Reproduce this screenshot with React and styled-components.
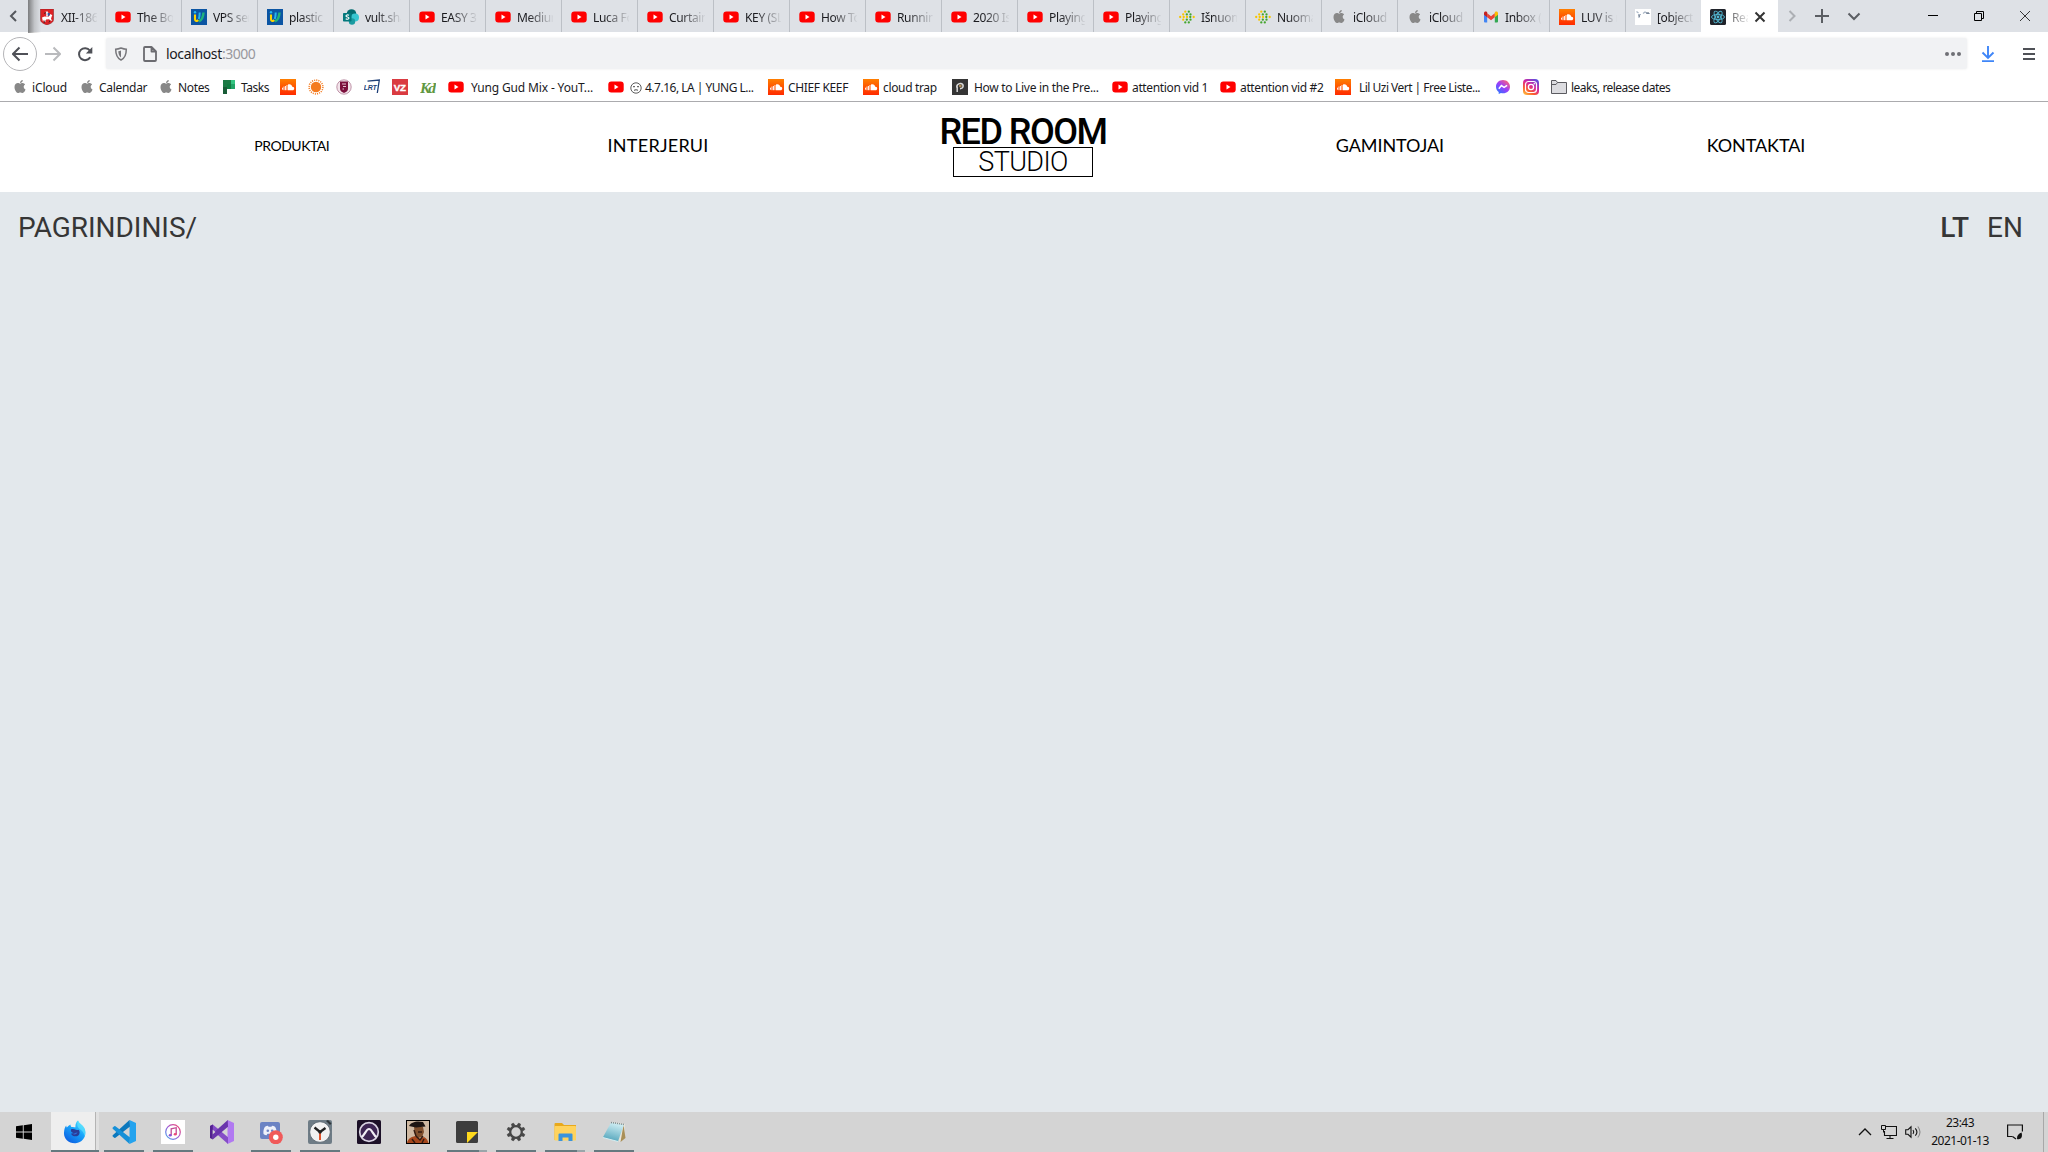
import React from "react";
import styled, { createGlobalStyle, css } from "styled-components";
import { FaApple } from "react-icons/fa";

const ui = `"Noto Sans", "Open Sans", sans-serif`;

const Global = createGlobalStyle`
  * { box-sizing: border-box; }
  html, body { margin: 0; height: 100%; overflow: hidden; }
  svg { display: block; flex: none; }
`;

const Screen = styled.div`
  width: 2048px;
  height: 1152px;
  display: flex;
  flex-direction: column;
  background: #fff;
  font-family: ${ui};
  color: #1a1a1e;
`;

/* ---------- tab strip ---------- */
const TabStrip = styled.div`
  height: 32px;
  flex: none;
  display: flex;
  background: #dee1e6;
`;
const ScrollLeft = styled.div`
  width: 28px;
  display: flex;
  align-items: center;
  justify-content: center;
`;
const StripShade = styled.div`
  width: 2px;
  position: relative;
  &::after {
    content: "";
    position: absolute;
    left: 0;
    top: 0;
    width: 13px;
    height: 33px;
    background: linear-gradient(90deg, rgba(70, 70, 70, 0.65), rgba(110, 110, 110, 0.25) 50%, transparent);
  }
`;
const Tab = styled.div`
  width: ${(p) => (p.$active ? 77 : p.$last ? 75 : 76)}px;
  height: 32px;
  flex: none;
  display: flex;
  align-items: center;
  padding: 2px 9px 0;
  padding-right: ${(p) => (p.$active ? 12 : 8)}px;
  gap: 6px;
  border-right: ${(p) => (p.$last || p.$active ? "0" : "1px solid #bcc0c6")};
  background: ${(p) => (p.$active ? "#fff" : "transparent")};
`;
const TabTitle = styled.span`
  flex: 1;
  min-width: 0;
  overflow: hidden;
  white-space: nowrap;
  font-size: 12px;
  line-height: 18px;
  margin-top: 2px;
  letter-spacing: ${(p) => p.$track ?? -0.35}px;
  mask-image: linear-gradient(90deg, #000 ${(p) => (p.$active ? "-60%" : "30%")}, transparent ${(p) => (p.$active ? "115%" : "103%")});
`;
const StripTool = styled.div`
  width: ${(p) => p.$w}px;
  display: flex;
  align-items: center;
  justify-content: center;
`;
const Grow = styled.div`
  flex: 1;
`;

/* ---------- navigation bar ---------- */
const NavBar = styled.div`
  height: 43px;
  flex: none;
  display: flex;
  align-items: center;
  background: #fff;
`;
const BackButton = styled.div`
  width: 34px;
  height: 34px;
  flex: none;
  margin-left: 3px;
  border: 1px solid #b5b5b8;
  border-radius: 50%;
  display: flex;
  align-items: center;
  justify-content: center;
`;
const NavTool = styled.div`
  width: ${(p) => p.$w}px;
  flex: none;
  display: flex;
  justify-content: center;
`;
const UrlBar = styled.div`
  width: 1861px;
  height: 31px;
  flex: none;
  margin-left: 5px;
  padding: 0 6px 0 8px;
  display: flex;
  align-items: center;
  background: #f1f2f4;
  border-radius: 2px;
  box-shadow: 0 0 3px rgba(0, 0, 0, 0.08);
`;
const Url = styled.span`
  flex: 1;
  margin-left: 8px;
  font-size: 14px;
  line-height: 20px;
  padding-top: 1px;
  letter-spacing: -0.36px;
  span { color: #98989d; letter-spacing: -0.5px; }
`;

/* ---------- bookmarks ---------- */
const Bookmarks = styled.div`
  height: 27px;
  flex: none;
  display: flex;
  align-items: flex-start;
  padding: 4px 0 0 12px;
  border-bottom: 1px solid #ababae;
`;
const Bookmark = styled.div`
  width: ${(p) => p.$w}px;
  height: 16px;
  flex: none;
  display: flex;
  align-items: center;
  gap: ${(p) => p.$gap ?? 4}px;
  font-size: 12px;
  line-height: 16px;
  letter-spacing: ${(p) => p.$track ?? -0.35}px;
  white-space: nowrap;
`;
const MarkText = styled.span`
  display: flex;
  align-items: center;
  gap: 3px;
  height: 18px;
  padding-top: 1px;
`;

/* ---------- web page ---------- */
const SiteHeader = styled.header`
  height: 90px;
  flex: none;
  display: grid;
  grid-template-columns: repeat(5, 366px);
  justify-content: center;
  background: #fff;
`;
const NavLink = styled.a`
  justify-self: center;
  align-self: start;
  margin-top: ${(p) => (p.$small ? 31 : 30)}px;
  line-height: 26px;
  color: #000;
  font-family: Lato, sans-serif;
  font-size: ${(p) => (p.$small ? 14 : 18)}px;
  letter-spacing: ${(p) => p.$track ?? 0}px;
  margin-right: ${(p) => -(p.$track ?? 0)}px;
  white-space: nowrap;
`;
const Logo = styled.div`
  display: flex;
  flex-direction: column;
  align-items: center;
  padding-right: 2px;
  font-family: Roboto, sans-serif;
  color: #000;
`;
const LogoName = styled.div`
  margin-top: 15px;
  height: 30px;
  font-size: 36px;
  line-height: 30px;
  font-weight: 500;
  letter-spacing: -1.5px;
  white-space: nowrap;
`;
const LogoBox = styled.div`
  width: 140px;
  height: 30px;
  border: 1px solid #000;
  text-align: center;
  font-size: 27px;
  line-height: 28px;
  font-weight: 300;
  letter-spacing: -0.6px;
`;
const SiteBody = styled.main`
  flex: 1;
  display: flex;
  justify-content: space-between;
  align-items: flex-start;
  padding: 19px 25px 0 18px;
  background: #e3e8ec;
  font-family: Roboto, sans-serif;
  font-size: 28px;
  line-height: 34px;
  color: #363636;
`;
const Crumb = styled.div`
  letter-spacing: -0.05px;
`;
const Langs = styled.div`
  display: flex;
  gap: 18px;
`;
const Lang = styled.span`
  font-weight: ${(p) => (p.$current ? 500 : 400)};
`;

/* ---------- taskbar ---------- */
const TaskBar = styled.div`
  height: 40px;
  flex: none;
  display: flex;
  background: #d4d4d4;
`;
const Start = styled.div`
  width: 51px;
  display: flex;
  align-items: center;
  padding-left: 16px;
`;
const Task = styled.div`
  width: 49px;
  height: 40px;
  flex: none;
  display: flex;
  flex-direction: column;
  align-items: center;
  justify-content: space-between;
  padding-top: 8px;
  ${(p) =>
    p.$focused &&
    css`
      width: 48px;
      background: linear-gradient(90deg, #eee 44px, #b4b4b4 44px, #b4b4b4 45px, #e0e0e0 45px);
    `}
`;
const Running = styled.div`
  height: 2px;
  width: ${(p) => (p.$full ? 48 : 40)}px;
  background: ${(p) =>
    p.$kind === "stack"
      ? "linear-gradient(90deg, #65797f 32px, #9aa6aa 32px)"
      : p.$kind
      ? "#65797f"
      : "transparent"};
`;
const Tray = styled.div`
  display: flex;
  align-items: center;
  height: 40px;
`;
const TrayItem = styled.div`
  width: ${(p) => p.$w}px;
  display: flex;
  justify-content: center;
`;
const Clock = styled.div`
  width: 54px;
  display: flex;
  flex-direction: column;
  align-items: center;
  font-size: 12px;
  line-height: 18px;
  color: #111;
  letter-spacing: -0.5px;
  white-space: nowrap;
`;
const ShowDesktop = styled.div`
  width: 5px;
  height: 40px;
  border-left: 1px solid #a8a8a8;
`;

/* ---------- icons ---------- */
const S = ({ s = 16, v = 16, children }) => (
  <svg width={s} height={s} viewBox={`0 0 ${v} ${v}`} fill="none">{children}</svg>
);
const Apple = () => <S v={16}><g transform="translate(0.5 0)"><FaApple x="0" y="0" size={15} color="#888" /></g></S>;
const YouTube = () => (
  <S>
    <rect x="0.3" y="2.4" width="15.4" height="11.2" rx="3" fill="#f00" />
    <path d="M6.5 5.6v4.8l4-2.4z" fill="#fff" />
  </S>
);
const SoundCloud = () => (
  <S>
    <defs><linearGradient id="sc" x1="0" y1="0" x2="0" y2="1"><stop stopColor="#ff7f00" /><stop offset="1" stopColor="#ff2a00" /></linearGradient></defs>
    <rect width="16" height="16" fill="url(#sc)" />
    <path d="M2.5 8.7v2M4 7.5v3.7M5.5 7v4.2M7 6v5.2" stroke="#fff" strokeWidth=".9" />
    <path d="M8 11.2V5.6c2-1 4 .2 4.2 2.2 1.300-.3 2 .6 2 1.600 0 1-.7 1.800-1.700 1.800z" fill="#fff" />
  </S>
);
const Vytis = () => (
  <S>
    <path d="M1.500 0h13v10.500c0 3-3 4-6.500 5.500-3.500-1.500-6.500-2.500-6.500-5.500z" fill="#dd2226" stroke="#7a1a1c" strokeWidth=".5" />
    <path d="M3 8.500l2.500-1 4 .3L11.500 5l1.800 1.300-.8 1.700-.5 2 1.300 1.500-1.500.3-1.700-1.500-3 .2-.8 2.500H4.800l.5-2.200-1.500 1.500z" fill="#fff" />
    <path d="M6.500 2.800l2-.6.8 1.600-.3 3.700H7l.3-2.500z" fill="#e8e8f0" />
    <path d="M8.700 4h2v2.300l-1 .7-1-.7z" fill="#2d57a8" />
    <path d="M5 4.500l2-1M6 11.500l-1 2.500M11 11.500l-1 2" stroke="#2b2226" strokeWidth=".8" />
  </S>
);
const Iv = () => (
  <S>
    <rect width="16" height="16" fill="#0b55a3" />
    <circle cx="4" cy="3.300" r="1.200" fill="#25b7ee" />
    <path d="M4 5.500v4.700c0 2 2 2.500 3.300.8" stroke="#ffd400" strokeWidth="2.100" />
    <path d="M7.700 10c1-1.700.8-4.200 1-6.500" stroke="#25b7ee" strokeWidth="2" />
    <path d="M8 12.300c3.200-1.300 4.200-4 4.500-8.800" stroke="#20b27b" strokeWidth="2.500" />
  </S>
);
const SharePoint = () => (
  <S>
    <circle cx="8.500" cy="5" r="4.800" fill="#036c70" />
    <circle cx="12" cy="8.500" r="4" fill="#37c6d0" />
    <circle cx="9" cy="12.500" r="3.200" fill="#1a9ba1" />
    <rect y="4" width="8.500" height="8.500" rx=".8" fill="#03787c" />
    <path d="M6 6.300c-1.500-.8-3-.4-3 .6 0 1.300 3 .8 3 2.200 0 1.200-1.900 1.500-3.300.6" stroke="#fff" strokeWidth="1.100" />
  </S>
);
const Dots = () => {
  const pts = [
    [6.300, 2.700, 0], [9.800, 2.700, 1],
    [4.200, 5.400, 0], [7.800, 5.400, 1], [11.500, 5.400, 1],
    [1.200, 8, 0], [4.700, 8, 0], [8, 8, 0], [11.300, 8, 1], [14.700, 8, 0],
    [4.200, 10.700, 0], [7.800, 10.700, 1], [11.500, 10.700, 1],
    [6.300, 13.400, 1], [9.800, 13.400, 1],
  ];
  return <S>{pts.map(([x, y, g], i) => <circle key={i} cx={x} cy={y} r="1.150" fill={g ? "#43a52c" : "#f6c500"} />)}</S>;
};
const Gmail = () => (
  <S>
    <path d="M1 4.500h3.200V13.500H2a1 1 0 0 1-1-1z" fill="#4285f4" />
    <path d="M11.800 4.500H15v8a1 1 0 0 1-1 1h-2.200z" fill="#34a853" />
    <path d="M4.200 4.300L8 7.200l3.800-2.900v4L8 11.200 4.200 8.300z" fill="#ea4335" />
    <path d="M1 4c0-1.700 1.800-2 2.700-1.200l.5.400v5L1 5.800z" fill="#c5221f" />
    <path d="M15 4c0-1.700-1.800-2-2.700-1.200l-.5.400v5L15 5.800z" fill="#fbbc04" />
  </S>
);
const Sketch = () => (
  <S>
    <rect width="16" height="16" fill="#fff" />
    <path d="M1.500 2.500l2 1.500M3 5.500h3M4 7v2M8 4.500l2-1.500 2 1M11 4.500h4" stroke="#a9b6c6" strokeWidth="1.200" />
    <path d="M3.500 6.500l1.500.8M11.500 4h2.500" stroke="#45546a" strokeWidth="1.200" />
  </S>
);
const ReactIcon = () => (
  <S>
    <rect width="16" height="16" rx="1.500" fill="#20232a" />
    <g stroke="#53b9d3" strokeWidth=".9">
      <ellipse cx="8" cy="8" rx="6.500" ry="2.600" />
      <ellipse cx="8" cy="8" rx="6.500" ry="2.600" transform="rotate(60 8 8)" />
      <ellipse cx="8" cy="8" rx="6.500" ry="2.600" transform="rotate(120 8 8)" />
    </g>
    <circle cx="8" cy="8" r="1.400" fill="#53b9d3" />
  </S>
);
const Planner = () => (
  <S>
    <path d="M2 1h8v7H6v7H2z" fill="#1c7a45" /><path d="M2 8h4v7H2z" fill="#185c37" />
    <path d="M6 5h4v5H6z" fill="#107c41" /><path d="M10 1h4v9h-4z" fill="#21a366" /><path d="M10 1h4v4h-4z" fill="#33c481" />
  </S>
);
const Sun = () => (
  <S>
    <circle cx="8" cy="8" r="6.900" stroke="#f47b20" strokeWidth="1.500" strokeDasharray="1.100 1.068" />
    <circle cx="8" cy="8" r="5.200" fill="#f47b20" />
  </S>
);
const Crest = () => (
  <S>
    <circle cx="8" cy="8" r="7.200" fill="#f2e4ea" stroke="#b98aa0" strokeWidth=".9" />
    <path d="M4 2.500h8V10c0 2-2 3-4 4-2-1-4-2-4-4z" fill="#7b0f3c" />
    <path d="M6 5h4M7 7.500h3M6.500 10h1.500" stroke="#e5c3d0" strokeWidth="1.100" />
  </S>
);
const SvgWord = styled.text`
  font-family: ${(p) => p.$family || '"Liberation Sans", sans-serif'};
  font-weight: 700;
  font-style: ${(p) => (p.$italic ? "italic" : "normal")};
  font-size: ${(p) => p.$size}px;
  letter-spacing: ${(p) => p.$track || 0}px;
`;
const Lrt = () => (
  <S>
    <path d="M3.500 2.200L15.300 1 13.300 14" stroke="#1f3f77" strokeWidth="1.300" />
    <SvgWord x="-.2" y="10.800" $size="7" $italic $track={-0.3} fill="#1f3f77">LRT</SvgWord>
  </S>
);
const Vz = () => (
  <S><rect width="16" height="16" fill="#da3b41" /><SvgWord x="1.700" y="11.500" $size="9.800" $track={-0.2} fill="#fff" stroke="#fff" strokeWidth=".3">VZ</SvgWord></S>
);
const Kd = () => (
  <S><SvgWord x="0" y="13.500" $size="15.500" $italic $track={-2} $family={'"Liberation Serif", serif'} fill="#5f9740">Kd</SvgWord></S>
);
const Pitch = () => (
  <S>
    <rect width="16" height="16" fill="#353535" />
    <path d="M5.200 13V7.500M5.500 9.500c-2-3 1-5.500 3.500-5 3 .6 3 5-1 5.200" stroke="#d8d8d8" strokeWidth="1.500" />
    <circle cx="8.300" cy="7" r="1.400" fill="#b08d57" />
  </S>
);
const Messenger = () => (
  <S>
    <defs><linearGradient id="ms" x1="0" y1="1" x2=".8" y2="0"><stop stopColor="#1483ff" /><stop offset=".55" stopColor="#9a3dfc" /><stop offset="1" stopColor="#ff6478" /></linearGradient></defs>
    <path d="M8 1c4 0 7 2.900 7 6.700S12 14.300 8 14.300c-.8 0-1.400-.1-2-.3l-2.300 1V13C2 11.800 1 9.900 1 7.700 1 3.900 4 1 8 1z" fill="url(#ms)" />
    <path d="M3.800 9.800l2.600-3.200 2.700 1.800 3-2" stroke="#fff" strokeWidth="1.500" />
  </S>
);
const Instagram = () => (
  <S>
    <defs><linearGradient id="ig" x1="0.1" y1="1" x2=".8" y2="0"><stop stopColor="#ffc23f" /><stop offset=".3" stopColor="#fb5b2d" /><stop offset=".6" stopColor="#d6249f" /><stop offset="1" stopColor="#5a4fe0" /></linearGradient></defs>
    <rect width="16" height="16" rx="4" fill="url(#ig)" />
    <rect x="2.500" y="2.500" width="11" height="11" rx="3" stroke="#fff" strokeWidth="1.200" />
    <circle cx="8" cy="8" r="2.600" stroke="#fff" strokeWidth="1.300" /><circle cx="11.300" cy="4.700" r=".8" fill="#fff" />
  </S>
);
const Folder = () => (
  <S>
    <path d="M.5 14.500V1.500h4.500l1.500 2h9v11z" fill="#dcdce0" stroke="#5b5b60" strokeWidth="1" />
    <path d="M.5 5.500H5L6.500 3.500" stroke="#5b5b60" strokeWidth="1" />
  </S>
);
const Face = () => (
  <S s={12} v={12}>
    <circle cx="6" cy="6" r="5.200" stroke="#333" strokeWidth=".8" />
    <path d="M3 4.700h2M7 4.700h2M4 8.400c1.200-.8 3-.8 4 0" stroke="#333" strokeWidth=".9" />
  </S>
);

/* taskbar icons */
const Windows = () => (
  <S><path d="M0 2.300L6.800 1.300v6.300H0zM7.700 1.200L16 0v7.600H7.700zM0 8.500h6.800v6.300L0 13.800zM7.700 8.500H16V16l-8.300-1.200z" fill="#000" /></S>
);
const Firefox = () => (
  <S s={24} v={24}>
    <defs>
      <linearGradient id="ff" x1=".9" y1="0" x2=".2" y2="1"><stop stopColor="#5ce6ff" /><stop offset=".45" stopColor="#18a5fb" /><stop offset="1" stopColor="#0b5be0" /></linearGradient>
    </defs>
    <path d="M15 .5c1 3 4 4 6 7 3.500 6 .5 15-8.500 15.800C5 23.600.5 18 1 12.500 1.200 9 2 7 3.200 5.500c.1 1 .3 1.500.6 2C5 6 6.200 5 7.500 4.500c0 1 .2 1.700 1 2.500 1.500-.3 3 0 4 .3-.3-2.800.5-5.300 2.500-6.800z" fill="url(#ff)" />
    <path d="M8 9.500c2-1 3.500.1 4.800.3 2 .3 2.500.3 3-.1 1.200 2 1.200 4.300-.5 5.700-2.200 1.700-5.500 1-6.800-1C7.500 13.300 9 13.500 10.500 13 8.500 12.600 7.500 11.200 8 9.500z" fill="#2a3c98" />
    <path d="M9 13.600c3 .6 3-1.200 5.500-1-1 2-3.500 2.500-5.500 1z" fill="#2c6fdc" />
    <path d="M15 .5c1 3 4 4 6 7 1.500 3 1.500 6 .5 9-.5-4-2.500-6-5-7.500-2-1.500-3-4.500-1.500-8.500z" fill="#63e8ff" opacity=".6" />
  </S>
);
const VsCode = () => (
  <S s={24} v={24}>
    <path d="M17.500 0L24 3v18l-6.500 3z" fill="#24a3ee" />
    <path d="M17.500 0L1 15l-.7 1 2.200 2 1-.2L18 6.500z" fill="#0b78bd" />
    <path d="M17.500 24L1 9 .3 8l2.200-2 1 .2L18 17.500z" fill="#1690d8" />
  </S>
);
const ITunes = () => (
  <S s={24} v={24}>
    <defs><linearGradient id="it" x1="0" y1="1" x2="1" y2="0"><stop stopColor="#3ba7ee" /><stop offset=".5" stopColor="#a05bd8" /><stop offset="1" stopColor="#fb4465" /></linearGradient></defs>
    <rect width="24" height="24" fill="#fff" />
    <circle cx="12" cy="12" r="7.300" stroke="url(#it)" strokeWidth="1.200" />
    <path d="M10.200 15.300V8.800l5-1.100v6.500" stroke="#c44b96" strokeWidth="1.300" />
    <ellipse cx="9.200" cy="15.300" rx="1.500" ry="1.200" fill="#8b55d8" /><ellipse cx="14.200" cy="14.200" rx="1.500" ry="1.200" fill="#ec4a78" />
  </S>
);
const VisualStudio = () => (
  <S s={24} v={24}>
    <path d="M17.500 0L24 3v18l-6.500 3z" fill="#b179f1" />
    <path d="M0 6l2.800-1.500L18 17.300V24L2.800 10.500z" fill="#854cc7" />
    <path d="M17.800 0L2.800 13.500v6L18 6.700z" fill="#6a35ac" />
    <path d="M0 6l2.800-1.500v15L0 18z" fill="#52218f" />
    <path d="M2.800 9.800L5.400 12l-2.600 2.200z" fill="#d4d4d4" />
  </S>
);
const Discord = () => (
  <S s={24} v={24}>
    <path d="M3 2h16a2 2 0 0 1 2 2v18l-3-3H3a2 2 0 0 1-2-2V4a2 2 0 0 1 2-2z" fill="#6b83c4" />
    <path d="M4.500 14c-.5-3 .5-6 1.500-7.200 1-.6 2-.9 3-1l.5 1h3l.5-1c1 .1 2 .4 3 1 1 1.200 2 4.200 1.500 7.200-1 .8-2 1.200-3 1.200l-1-1.500H8.500l-1 1.500c-1 0-2-.4-3-1.200z" fill="#eef1fa" />
    <circle cx="8.800" cy="10.800" r="1.300" fill="#6b83c4" /><circle cx="13.200" cy="10.800" r="1.300" fill="#6b83c4" />
    <circle cx="16.800" cy="17.300" r="7" fill="#f05a5a" /><circle cx="16.800" cy="17.300" r="2.700" fill="#fff" />
  </S>
);
const Alarm = () => (
  <S s={24} v={24}>
    <rect width="24" height="24" rx="2" fill="#6e7c86" />
    <path d="M18 1l2-1 3.500 3.500-1.500 1.500z" fill="#2f363b" />
    <circle cx="12" cy="12" r="10.300" fill="#f2f2f2" stroke="#59656e" strokeWidth=".8" />
    <path d="M6.500 7.500L12 12l5.500-4" stroke="#222" strokeWidth="2.300" /><path d="M12 11v9" stroke="#e2562f" strokeWidth="2" />
    <circle cx="12" cy="12" r="1.700" fill="#222" />
  </S>
);
const ProTools = () => (
  <S s={24} v={24}>
    <rect width="24" height="24" rx="1.500" fill="#1c1027" />
    <circle cx="12" cy="12" r="9.300" fill="#3d2553" stroke="#d9d3e2" strokeWidth="1.700" />
    <path d="M4.500 17c3-1 4.500-8 7.500-8s4.500 7 7.500 8" stroke="#f1eef5" strokeWidth="2.200" />
  </S>
);
const Portrait = () => (
  <S s={24} v={24}>
    <rect x=".5" y=".5" width="23" height="23" fill="#cfb9a2" stroke="#000" />
    <path d="M8 7h9l1 5-2 5-4 1-3-3z" fill="#80502d" />
    <path d="M3 6c2-4 8-5.500 14-4l2.500 4.500L10 7.500z" fill="#1d1512" />
    <path d="M1 23c1-5 5-6 8-7l5 3 4-2c3 1.500 4 4 4.500 6z" fill="#a5471c" />
    <path d="M8 10l2 6 4 4 3-4M6 19l3 4M16 12h-4M18 19l-2 4" stroke="#321a10" strokeWidth="1.400" />
  </S>
);
const Sticky = () => (
  <S s={24} v={24}>
    <path d="M1 2.500A1.500 1.500 0 0 1 2.500 1h19A1.500 1.500 0 0 1 23 2.500V21.500a1.500 1.500 0 0 1-1.500 1.500H2.500A1.500 1.500 0 0 1 1 21.500z" fill="#3d3d3d" />
    <path d="M12 12h11L12 23z" fill="#ffd91c" />
  </S>
);
const Gear = () => (
  <S s={24} v={24}>
    <circle cx="12" cy="12" r="5.800" stroke="#474747" strokeWidth="2.300" />
    {[22.500, 67.500, 112.500, 157.500, 202.500, 247.500, 292.500, 337.500].map((a) => (
      <path key={a} d="M10.500 5.500l.4-2.500h2.200l.4 2.500z" fill="#474747" stroke="#474747" strokeWidth=".7" transform={`rotate(${a} 12 12)`} />
    ))}
  </S>
);
const Explorer = () => (
  <S s={24} v={24}>
    <path d="M1.500 4a1 1 0 0 1 1-1H9l2 2h12v15h-21.500z" fill="#e8a91c" />
    <rect x="1.500" y="6" width="21.500" height="14.500" rx=".8" fill="#ffd35d" />
    <path d="M5.500 21v-6.500a1 1 0 0 1 1-1h12a1 1 0 0 1 1 1V21h-4v-3.500h-6V21z" fill="#3a93dc" />
  </S>
);
const Notepad = () => (
  <S s={24} v={24}>
    <path d="M9 2l14 2-1 14-5 4z" fill="#e9e4d8" />
    <path d="M21.500 5L23.500 18l-5 4z" fill="#a98f56" />
    <defs><linearGradient id="np" x1=".6" y1="0" x2=".3" y2="1"><stop stopColor="#d3f0f5" /><stop offset="1" stopColor="#4fa3ba" /></linearGradient></defs>
    <path d="M9 2.500l13 2-6 17L.8 17.500z" fill="url(#np)" />
    <path d="M9 2.500l13 2" stroke="#7c8a8d" strokeWidth="1.500" strokeDasharray="1 1" />
    <path d="M.8 17.500L16 21.500" stroke="#d6eef2" strokeWidth="1" />
  </S>
);

const yt = YouTube;
const tabs = [
  [Vytis, "XII-1869"], [yt, "The Box"], [Iv, "VPS serv"], [Iv, "plastic b"], [SharePoint, "vult.sha"],
  [yt, "EASY 30"], [yt, "Medium"], [yt, "Luca Fo"], [yt, "Curtain"], [yt, "KEY (SL"], [yt, "How To"],
  [yt, "Running"], [yt, "2020 Isu"], [yt, "Playing"], [yt, "Playing"], [Dots, "Išnuom"], [Dots, "Nuoma"],
  [Apple, "iCloud"], [Apple, "iCloud"], [Gmail, "Inbox ("], [SoundCloud, "LUV is r"], [Sketch, "[object"],
];

/* icon, x of the slot, label, gap, tracking */
const marks = [
  [Apple, 12, "iCloud", 4, -0.15], [Apple, 79, "Calendar", 4, -0.3], [Apple, 158, "Notes"], [Planner, 221, "Tasks", 4, -0.45],
  [SoundCloud, 280], [Sun, 308], [Crest, 336], [Lrt, 364], [Vz, 392], [Kd, 420],
  [yt, 448, "Yung Gud Mix - YouT...", 7, -0.15], [yt, 608, <><Face />4.7.16, LA | YUNG L...</>, 6, -0.5],
  [SoundCloud, 768, "CHIEF KEEF"], [SoundCloud, 863, "cloud trap"],
  [Pitch, 952, "How to Live in the Pre...", 6, -0.3], [yt, 1112, "attention vid 1"], [yt, 1220, "attention vid #2"],
  [SoundCloud, 1335, "Lil Uzi Vert | Free Liste...", 8, -0.52], [Messenger, 1495], [Instagram, 1523],
  [Folder, 1551, "leaks, release dates", 4, -0.53],
];

const tasks = [
  [Firefox, "one", true], [VsCode, "one"], [ITunes, "one"], [VisualStudio, ""], [Discord, "one"], [Alarm, "one"],
  [ProTools, ""], [Portrait, ""], [Sticky, "stack"], [Gear, "one"], [Explorer, "stack"], [Notepad, "one"],
];

export default function App() {
  return (
    <Screen>
      <Global />
      <TabStrip>
        <ScrollLeft><S><path d="M10 3L5 8l5 5" stroke="#55585d" strokeWidth="2" /></S></ScrollLeft>
        <StripShade />
        {tabs.map(([Icon, title], i) => (
          <Tab key={i} $last={i === tabs.length - 1}>
            <Icon /><TabTitle>{title}</TabTitle>
          </Tab>
        ))}
        <Tab $active>
          <ReactIcon /><TabTitle $active>React</TabTitle>
          <S s={12} v={12}><path d="M1.500 1.500l9 9M10.500 1.500l-9 9" stroke="#333" strokeWidth="2" /></S>
        </Tab>
        <StripTool $w={28}><S><path d="M5.500 3l5 5-5 5" stroke="#acafb4" strokeWidth="2" /></S></StripTool>
        <StripTool $w={32}><S><path d="M8 1v14M1 8h14" stroke="#5b5e63" strokeWidth="2" /></S></StripTool>
        <StripTool $w={32}><S><path d="M2.500 5.500L8 11l5.500-5.500" stroke="#5b5e63" strokeWidth="2" /></S></StripTool>
        <Grow />
        <StripTool $w={46}><S><path d="M3 7.500h10" stroke="#000" /></S></StripTool>
        <StripTool $w={46}><S><path d="M3.500 5.500h7v7h-7zM5.500 5.500v-2h7v7h-2" stroke="#000" /></S></StripTool>
        <StripTool $w={46}><S><path d="M3 3l10 10M13 3L3 13" stroke="#222" strokeWidth=".9" /></S></StripTool>
      </TabStrip>

      <NavBar>
        <BackButton><S><path d="M16 8H1.500M7.500 1.500L1 8l6.500 6.500" stroke="#4f5157" strokeWidth="2" /></S></BackButton>
        <NavTool $w={32}><S><path d="M0 8h14.500M8.500 1.500L15 8l-6.500 6.500" stroke="#b9babd" strokeWidth="2" /></S></NavTool>
        <NavTool $w={32}>
          <S><path d="M13.200 11.200A6 6 0 1 1 12.800 4.500" stroke="#4f5157" strokeWidth="2" /><path d="M15.300 1v6.500H8.800z" fill="#4f5157" /></S>
        </NavTool>
        <UrlBar>
          <S s={14} v={14}>
            <path d="M7 1c2 .8 3.800 1.200 5.300 1.200 0 4.800-.8 8.600-5.300 10.800C2.500 10.800 1.700 7 1.700 2.200 3.200 2.200 5 1.800 7 1z" stroke="#77777b" strokeWidth="1.500" />
            <path d="M7 3.500v7C5 9 4.400 6.500 4.300 4.200 5.300 4.100 6.200 3.900 7 3.500z" fill="#77777b" />
          </S>
          <NavTool $w={14} />
          <S><path d="M2 2a1 1 0 0 1 1-1h6.500L14 5.500V14a1 1 0 0 1-1 1H3a1 1 0 0 1-1-1zM9.500 1v4.500H14" stroke="#6b6b70" strokeWidth="1.800" strokeLinejoin="round" /></S>
          <Url>localhost<span>:3000</span></Url>
          <S><g fill="#6f7075"><circle cx="2" cy="8" r="2" /><circle cx="8" cy="8" r="2" /><circle cx="14" cy="8" r="2" /></g></S>
        </UrlBar>
        <NavTool $w={42}><S><path d="M8 0v12M2.500 6.500L8 12l5.500-5.500M2 15.200h12" stroke="#3f86f8" strokeWidth="1.900" /></S></NavTool>
        <NavTool $w={39}><S><path d="M2 3h12M2 8h12M2 13h12" stroke="#4f5157" strokeWidth="2" /></S></NavTool>
      </NavBar>

      <Bookmarks>
        {marks.map(([Icon, x, label, gap, track], i) => (
          <Bookmark key={x} $w={(marks[i + 1]?.[1] ?? 1700) - x} $gap={gap} $track={track}>
            <Icon />{label && <MarkText>{label}</MarkText>}
          </Bookmark>
        ))}
      </Bookmarks>

      <SiteHeader>
        <NavLink $small $track={-0.45}>PRODUKTAI</NavLink>
        <NavLink $track={0.25}>INTERJERUI</NavLink>
        <Logo><LogoName>RED ROOM</LogoName><LogoBox>STUDIO</LogoBox></Logo>
        <NavLink $track={-0.1}>GAMINTOJAI</NavLink>
        <NavLink $track={-0.1}>KONTAKTAI</NavLink>
      </SiteHeader>
      <SiteBody>
        <Crumb>PAGRINDINIS/</Crumb>
        <Langs><Lang $current>LT</Lang><Lang>EN</Lang></Langs>
      </SiteBody>

      <TaskBar>
        <Start><Windows /></Start>
        {tasks.map(([Icon, kind, focused], i) => (
          <Task key={i} $focused={focused}><Icon /><Running $kind={kind} $full={focused} /></Task>
        ))}
        <Grow />
        <Tray>
          <TrayItem $w={22}><S><path d="M2 11l6-6 6 6" stroke="#111" strokeWidth="1.300" /></S></TrayItem>
          <TrayItem $w={26}>
            <S><path d="M5 2.500h10.500v9H3.500V7M9 11.500v3M5.500 14.500h7" stroke="#111" strokeWidth="1.100" /><path d="M.5 1.500h4v4h-4zM2.500 5.500v3" stroke="#111" /></S>
          </TrayItem>
          <TrayItem $w={22}>
            <S><path d="M.7 5.700h2.300L6 2.800v10.400L3 10.300H.7z" stroke="#111" strokeWidth="1.100" /><path d="M8 6c1 1.300 1 2.700 0 4M10.300 4.300c2 2.300 2 5.200 0 7.400" stroke="#111" strokeWidth="1.100" /><path d="M12.800 2.500c2.600 3.300 2.600 7.700 0 11" stroke="#888" strokeWidth="1.100" /></S>
          </TrayItem>
          <TrayItem $w={9} />
          <Clock><span>23:43</span><span>2021-01-13</span></Clock>
          <TrayItem $w={56}>
            <S><path d="M5.500 12.500H.6V1h14.800v6.500" stroke="#111" strokeWidth="1.200" /><path d="M5.500 12.500l3.500 2.500" stroke="#111" strokeWidth="1.200" /><path d="M14.500 8.500c-3 1-4.800 3.500-4.500 6.500 3.500 1 6-1.500 4.500-6.500z" fill="#111" /></S>
          </TrayItem>
          <ShowDesktop />
        </Tray>
      </TaskBar>
    </Screen>
  );
}
